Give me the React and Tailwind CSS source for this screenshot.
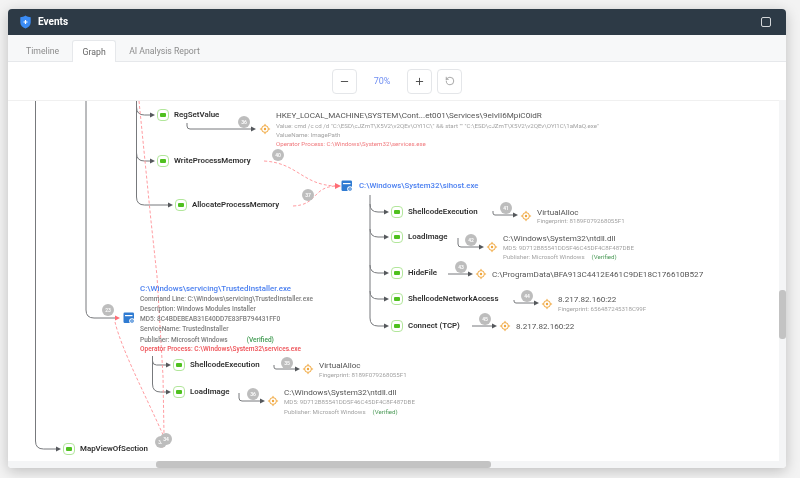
import React from "react";
import { Minus, Plus, RotateCcw } from "lucide-react";

const at = (x, y) => ({ left: x - 8, top: y - 100 });

const apis = [
  ["RegSetValue", 163, 114],
  ["WriteProcessMemory", 163, 160],
  ["AllocateProcessMemory", 181, 204],
  ["ShellcodeExecution", 397, 211],
  ["LoadImage", 397, 236],
  ["HideFile", 397, 272],
  ["ShellcodeNetworkAccess", 397, 298],
  ["Connect (TCP)", 397, 325],
  ["ShellcodeExecution", 179, 364],
  ["LoadImage", 179, 391],
  ["MapViewOfSection", 69, 448],
];

const targets = [[265, 128], [526, 215], [492, 246], [481, 273], [547, 303], [505, 325], [308, 368], [273, 400]];

const badges = [
  [244, 121, "36"], [278, 154, "40"], [308, 194, "37"], [506, 207, "41"], [471, 239, "42"],
  [461, 266, "43"], [527, 295, "44"], [485, 318, "45"], [108, 309, "23"], [287, 362, "35"],
  [253, 393, "36"], [161, 441, "33"], [166, 438, "34"],
];

const grayPaths = [
  "M35.5 100V440q0 8 8 8H58",
  "M86 100V309q0 8 8 8H117",
  "M136.5 100V106q0 8 8 8H152",
  "M136.5 106V152q0 8 8 8H152",
  "M136.5 150V196q0 8 8 8H170",
  "M370 194V203q0 8 8 8H386",
  "M370 203V228q0 8 8 8H386",
  "M370 228V264q0 8 8 8H386",
  "M370 264V290q0 8 8 8H386",
  "M370 290V317q0 8 8 8H386",
  "M152.5 355V360q0 4 4 4H168",
  "M152.5 360V383q0 8 8 8H168",
  "M187 122V125q0 3 3 3H253",
  "M493 210V212q0 2 2 2H515",
  "M458 237V243q0 3 3 3H481",
  "M448 273H470",
  "M514 299V300q0 2 2 2H536",
  "M472 325H494",
  "M274 364V366q0 2 2 2H297",
  "M239 392V397q0 3 3 3H262",
];

const arrowHeads = [
  [61, 448], [155, 114], [155, 160], [173, 204], [389, 211], [389, 236], [389, 272], [389, 298], [389, 325],
  [171, 364], [171, 391], [256, 128], [518, 214], [484, 246], [473, 273], [539, 302], [497, 325], [300, 368], [265, 400],
];

const redPaths = [
  "M139 100L151 220L157 275L163 375L164 433L162 448",
  "M115 321C122 350 146 395 164 436",
  "M264 160C298 162 302 184 336 185",
  "M293 205C318 204 312 186 336 185",
];

function Green({ x, y, label }) {
  return (
    <>
      <div className="absolute flex h-[12px] w-[12px] -translate-x-1/2 -translate-y-1/2 items-center justify-center rounded-[4px] border border-[#b2e69b] bg-white" style={at(x, y)}>
        <div className="h-[4px] w-[6px] rounded-[1px] bg-[#4fc01f]" />
      </div>
      <div className="absolute -translate-y-1/2 text-[7.9px] leading-none font-semibold whitespace-nowrap text-[#2f2f2f]" style={at(x + 11, y)}>{label}</div>
    </>
  );
}

function Target({ x, y }) {
  return (
    <svg className="absolute -translate-x-1/2 -translate-y-1/2" style={at(x, y)} width="11" height="11" viewBox="0 0 11 11" fill="none" stroke="#f0a63c">
      <circle cx="5.5" cy="5.5" r="3.4" />
      <path d="M5.5 0.3V2M5.5 9V10.7M0.3 5.5H2M9 5.5H10.7" />
      <circle cx="5.5" cy="5.5" r="1.2" fill="#f0a63c" stroke="none" />
    </svg>
  );
}

function Proc({ x, y }) {
  return (
    <svg className="absolute -translate-x-1/2 -translate-y-1/2" style={at(x, y)} width="12" height="12" viewBox="0 0 12 12">
      <rect x="0.5" y="0.5" width="10.5" height="10.5" rx="1.2" fill="#2f7bd2" />
      <rect x="2" y="3" width="7.5" height="1.2" fill="#fff" />
      <circle cx="9" cy="9" r="2.8" fill="#fff" />
      <circle cx="9" cy="9" r="1.8" fill="#2f7bd2" />
      <circle cx="9" cy="9" r="0.7" fill="#fff" />
    </svg>
  );
}

function Badge({ x, y, n }) {
  return (
    <div className="absolute flex h-[12px] w-[12px] -translate-x-1/2 -translate-y-1/2 items-center justify-center rounded-full bg-[#bdbdbd] text-[5px] leading-none font-semibold text-white" style={at(x, y)}>{n}</div>
  );
}

function Line({ x, y, className, children }) {
  return (
    <div className={"absolute -translate-y-1/2 leading-none whitespace-nowrap " + className} style={at(x, y)}>{children}</div>
  );
}

const main = "text-[8.1px] text-[#555555]";
const sub = "text-[6.15px] text-[#a3a3a3]";
const red = "text-[6.15px] text-[#f0787c]";
const det = "text-[6.55px] font-medium text-[#7d7d7d]";

function Diagram() {
  return (
    <div className="relative min-w-0 flex-1 overflow-hidden border-t border-[#f0f0f0] bg-white">
      <svg className="absolute top-0 left-0" width="771" height="361" viewBox="8 100 771 361" fill="none">
        {grayPaths.map((d, i) => (
          <path key={i} d={d} stroke="#77797c" strokeWidth="1" />
        ))}
        {arrowHeads.map(([x, y], i) => (
          <path key={i} d={`M${x} ${y}l-5 -2.5v5z`} fill="#55585c" />
        ))}
        {redPaths.map((d, i) => (
          <path key={i} d={d} stroke="#ff9ca1" strokeWidth="1" strokeDasharray="3 2" />
        ))}
        <path d="M341 185l-6 -3v6z" fill="#ff6d75" />
        <path d="M120 317l-5 -2.5v5z" fill="#ff6d75" />
      </svg>

      {apis.map(([l, x, y], i) => <Green key={i} x={x} y={y} label={l} />)}
      {targets.map(([x, y], i) => <Target key={i} x={x} y={y} />)}
      {badges.map(([x, y, n], i) => <Badge key={i} x={x} y={y} n={n} />)}
      <Proc x={347} y={185} />
      <Proc x={129} y={317} />

      <Line x={276} y={114} className={main}>HKEY_LOCAL_MACHINE\SYSTEM\Cont...et001\Services\9eIvII6MpiC0idR</Line>
      <Line x={276} y={125} className={sub}>Value: cmd /c cd /d "C:\ESD\cJZmT\X5V2\v2QEv\OYI1C\" &amp;&amp; start "" "C:\ESD\cJZmT\X5V2\v2QEv\OYI1C\1aMaQ.exe"</Line>
      <Line x={276} y={134} className={sub}>ValueName: ImagePath</Line>
      <Line x={276} y={143} className={red}>Operator Process: C:\Windows\System32\services.exe</Line>

      <Line x={359} y={185} className="text-[7.8px] font-medium text-[#4a7ff0]">C:\Windows\System32\sihost.exe</Line>

      <Line x={537} y={211} className={main}>VirtualAlloc</Line>
      <Line x={537} y={220} className={sub}>Fingerprint: 8189F079268055F1</Line>
      <Line x={503} y={237} className={main}>C:\Windows\System32\ntdll.dll</Line>
      <Line x={503} y={247} className={sub}>MD5: 9D712B85541DD5F46C45DF4C8F487DBE</Line>
      <Line x={503} y={256} className={sub}>Publisher: Microsoft Windows<span className="ml-[7px] text-[#4c9a58]">(Verified)</span></Line>
      <Line x={492} y={273} className={main}>C:\ProgramData\BFA913C4412E461C9DE18C176610B527</Line>
      <Line x={558} y={298} className={main}>8.217.82.160:22</Line>
      <Line x={558} y={308} className={sub}>Fingerprint: 656487245318C99F</Line>
      <Line x={516} y={325} className={main}>8.217.82.160:22</Line>

      <Line x={140} y={288} className="text-[7.9px] font-medium text-[#4a7ff0]">C:\Windows\servicing\TrustedInstaller.exe</Line>
      <Line x={140} y={298} className={det}>Command Line: C:\Windows\servicing\TrustedInstaller.exe</Line>
      <Line x={140} y={308} className={det}>Description: Windows Modules Installer</Line>
      <Line x={140} y={318} className={det}>MD5: 8C4BDEBEAB31E40DD7E83FB794431FF0</Line>
      <Line x={140} y={328} className={det}>ServiceName: TrustedInstaller</Line>
      <Line x={140} y={339} className={det}>Publisher: Microsoft Windows<span className="ml-[19px] text-[#3f9a50]">(Verified)</span></Line>
      <Line x={140} y={347.5} className="text-[6.55px] font-medium text-[#ee4f55]">Operator Process: C:\Windows\System32\services.exe</Line>

      <Line x={319} y={364} className={main}>VirtualAlloc</Line>
      <Line x={319} y={374} className={sub}>Fingerprint: 8189F079268055F1</Line>
      <Line x={284} y={391} className={main}>C:\Windows\System32\ntdll.dll</Line>
      <Line x={284} y={401} className={sub}>MD5: 9D712B85541DD5F46C45DF4C8F487DBE</Line>
      <Line x={284} y={411} className={sub}>Publisher: Microsoft Windows<span className="ml-[7px] text-[#4c9a58]">(Verified)</span></Line>
    </div>
  );
}

function ToolButton({ children }) {
  return (
    <button className="flex h-[25px] w-[25px] items-center justify-center rounded-[4px] border border-[#e4e6e9] bg-white text-[#444]">{children}</button>
  );
}

export default function App() {
  return (
    <div className="h-[478px] w-[800px] overflow-hidden bg-[#f3f3f3] pt-[9px] pl-[8px] font-['Roboto','Noto_Sans',sans-serif] blur-[0.3px]">
      <div className="flex h-[459px] w-[778px] flex-col overflow-hidden rounded-[4px] bg-white shadow-[0_3px_14px_rgba(0,0,0,0.22)]">
        <header className="flex h-[26px] shrink-0 items-center justify-between bg-[#2d3a46] pr-[15px] pl-[12px]">
          <div className="flex items-center gap-[7px]">
            <svg width="11" height="14" viewBox="0 0 11 14">
              <path d="M5.5 0.5C7 1.6 9 2.2 10.7 2.2V7.5C10.7 10.4 8.4 12.4 5.5 13.6C2.6 12.4 0.3 10.4 0.3 7.5V2.2C2 2.2 4 1.6 5.5 0.5Z" fill="#3b8cf5" />
              <path d="M5.5 5V9M3.5 7H7.5" stroke="#fff" strokeWidth="1.2" />
            </svg>
            <span className="text-[10px] leading-none font-bold text-white">Events</span>
          </div>
          <div className="h-[10px] w-[10px] rounded-[2px] border-[1.5px] border-[#d4d7da]" />
        </header>

        <nav className="flex h-[27px] shrink-0 items-end border-b border-[#e6e8eb] bg-[#f7f8f9] pl-[18px] text-[8.7px] leading-none text-[#8c8c8c]">
          <div className="flex h-[21px] items-center pt-[1px] pr-[13px]">Timeline</div>
          <div className="-mb-px flex h-[22px] w-[44px] items-center justify-center rounded-t-[3px] border border-b-0 border-[#e6e8eb] bg-white pt-[1px] text-[#666]">Graph</div>
          <div className="flex h-[21px] items-center pt-[1px] pl-[13px]">AI Analysis Report</div>
        </nav>

        <div className="flex h-[38px] shrink-0 items-center justify-center bg-white">
          <ToolButton><Minus size={11} strokeWidth={2} /></ToolButton>
          <span className="w-[50px] text-center text-[9px] leading-none text-[#6f8ef2]">70%</span>
          <ToolButton><Plus size={11} strokeWidth={2} /></ToolButton>
          <div className="w-[5px]" />
          <ToolButton><RotateCcw size={10} strokeWidth={1.5} className="text-[#777]" /></ToolButton>
        </div>

        <div className="flex min-h-0 flex-1">
          <Diagram />
          <div className="flex w-[7px] shrink-0 flex-col bg-[#f4f5f6] pt-[190px]">
            <div className="h-[49px] rounded-[3px] bg-[#c3c3c3]" />
          </div>
        </div>
        <div className="flex h-[7px] shrink-0 bg-[#f4f5f6] pl-[148px]">
          <div className="h-[7px] w-[335px] rounded-[3px] bg-[#c3c3c3]" />
        </div>
      </div>
    </div>
  );
}
